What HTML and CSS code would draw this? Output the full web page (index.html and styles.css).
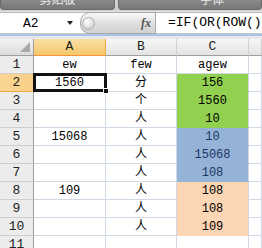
FILE: index.html
```html
<!DOCTYPE html>
<html>
<head>
<meta charset="utf-8">
<link rel="stylesheet" href="styles.css">
</head>
<body>
<div class="app">
  <div class="ribbon">
    <div class="group g1"><span class="glabel">剪贴板</span></div>
    <div class="group g2"><span class="glabel">字体</span></div>
  </div>
  <div class="fbar">
    <div class="namebox"><span class="nb-text">A2</span><span class="nb-arrow"></span></div>
    <div class="capsule"><span class="knob"></span><span class="fx">fx</span></div>
    <div class="formula">=IF(OR(ROW()</div>
  </div>
  <div class="sep"></div>
  <div class="sheet">
    <div class="corner"><span class="tri"></span></div>
    <div class="ch sel-h">A</div>
    <div class="ch">B</div>
    <div class="ch">C</div>
    <div class="ch last"></div>

    <div class="rh">1</div>
    <div class="c">ew</div><div class="c">few</div><div class="c">agew</div><div class="c last"></div>

    <div class="rh sel-r">2</div>
    <div class="c active">1560<span class="selbox"><span class="handle"></span></span></div><div class="c">分</div><div class="c green">156</div><div class="c last"></div>

    <div class="rh">3</div>
    <div class="c"></div><div class="c">个</div><div class="c green">1560</div><div class="c last"></div>

    <div class="rh">4</div>
    <div class="c"></div><div class="c">人</div><div class="c green">10</div><div class="c last"></div>

    <div class="rh">5</div>
    <div class="c">15068</div><div class="c">人</div><div class="c blue">10</div><div class="c last"></div>

    <div class="rh">6</div>
    <div class="c"></div><div class="c">人</div><div class="c blue">15068</div><div class="c last"></div>

    <div class="rh">7</div>
    <div class="c"></div><div class="c">人</div><div class="c blue">108</div><div class="c last"></div>

    <div class="rh">8</div>
    <div class="c">109</div><div class="c">人</div><div class="c peach">108</div><div class="c last"></div>

    <div class="rh">9</div>
    <div class="c"></div><div class="c">人</div><div class="c peach">108</div><div class="c last"></div>

    <div class="rh">10</div>
    <div class="c"></div><div class="c">人</div><div class="c peach">109</div><div class="c last"></div>

    <div class="rh">11</div>
    <div class="c"></div><div class="c"></div><div class="c"></div><div class="c last"></div>
  </div>
</div>
</body>
</html>
```

FILE: styles.css
```css
* { box-sizing: border-box; }
html, body { margin: 0; padding: 0; }
body {
  width: 262px;
  height: 248px;
  overflow: hidden;
  background: #e3e3e3;
  font-family: "Liberation Mono", "Noto Sans CJK SC", monospace;
}
.app { width: 262px; }

.ribbon {
  display: flex;
  gap: 3px;
  height: 11px;
  background: #cfcfcf;
}
.group {
  height: 10px;
  overflow: hidden;
  background: linear-gradient(#8a8a8a, #767676);
  border-radius: 0 0 4px 4px;
  border: 1px solid #6a6a6a;
  border-top: none;
  display: flex;
  justify-content: center;
}
.g1 { width: 115px; }
.g2 { flex: 1; padding-left: 44px; }
.glabel {
  display: block;
  margin-top: -8px;
  font-family: "Noto Sans CJK SC", sans-serif;
  font-size: 12px;
  line-height: 14px;
  color: #eaeaea;
}

.fbar {
  display: flex;
  height: 22px;
  margin-top: 1px;
  background: #fff;
  border-top: 1px solid #b9b9b9;
  border-bottom: 1px solid #c8c8c8;
}
.namebox {
  width: 80px;
  display: flex;
  align-items: center;
  padding-left: 23px;
  background: #fff;
}
.nb-text {
  font-size: 13px;
  color: #000;
  width: 44px;
}
.nb-arrow {
  width: 0;
  height: 0;
  border-left: 3px solid transparent;
  border-right: 3px solid transparent;
  border-top: 4px solid #222;
}
.capsule {
  width: 76px;
  display: flex;
  align-items: center;
  justify-content: space-between;
  padding: 0 4px 0 1px;
  background: linear-gradient(#f8f8f8, #dedede 55%, #d2d2d2);
  border: 1px solid #a9a9a9;
  border-radius: 10px 0 0 10px;
  margin: -1px 0;
}
.knob {
  width: 13px;
  height: 13px;
  border-radius: 50%;
  background: radial-gradient(circle at 40% 35%, #ffffff 0, #e6e6e6 45%, #b8b8b8 100%);
  border: 1px solid #b0b0b0;
}
.fx {
  font-family: "Liberation Serif", serif;
  font-style: italic;
  font-weight: bold;
  font-size: 12px;
  color: #555;
}
.formula {
  flex: 1;
  padding-left: 12px;
  font-size: 13px;
  line-height: 20px;
  color: #000;
  white-space: nowrap;
  overflow: hidden;
}

.sep {
  background: #e8e8e8;
  border-top: 2px solid #a9c3e6;
  height: 5px;
}

.sheet {
  display: grid;
  grid-template-columns: 34px 72px 71px 72px 13px;
  grid-template-rows: 17px repeat(11, 18px);
  background: #fff;
}
.corner {
  background: linear-gradient(#f2f2f2, #dcdcdc);
  border-right: 1px solid #9e9e9e;
  border-bottom: 1px solid #9e9e9e;
  display: flex;
  justify-content: flex-end;
  align-items: flex-end;
  padding: 0 3px 3px 0;
}
.tri {
  width: 0;
  height: 0;
  border-left: 10px solid transparent;
  border-bottom: 10px solid #a8a8a8;
}
.ch {
  background: linear-gradient(#f7f7f7, #e3e3e3);
  border-right: 1px solid #cfcfcf;
  border-bottom: 1px solid #9e9e9e;
  font-size: 13px;
  line-height: 16px;
  text-align: center;
  color: #222;
}
.ch.sel-h {
  background: linear-gradient(#fbdfa6, #f5c869);
  border-right: 1px solid #f0a849;
  border-bottom: 1px solid #f29436;
}
.rh {
  background: #ececec;
  border-right: 1px solid #9e9e9e;
  border-bottom: 1px solid #cfcfcf;
  font-size: 13px;
  line-height: 17px;
  text-align: center;
  color: #222;
}
.rh.sel-r {
  background: linear-gradient(90deg, #fbd694, #f9cf86);
  border-right: 1px solid #f29436;
  border-bottom: 1px solid #f0a849;
}
.c {
  border-right: 1px solid #d0d7e5;
  border-bottom: 1px solid #d0d7e5;
  font-size: 12px;
  line-height: 18px;
  text-align: center;
  color: #000;
  white-space: nowrap;
}
.c.green { background: #92d050; border-color: #92d050; border-right-color: #d0d7e5; }
.c.blue { background: #95b3d7; border-color: #95b3d7; border-right-color: #d0d7e5; color: #1c3566; }
.c.peach { background: #fcd5b4; border-color: #fcd5b4; border-right-color: #d0d7e5; }
.c.active { position: relative; }
.selbox {
  position: absolute;
  left: -1px;
  top: -1px;
  right: -2px;
  bottom: -1px;
  border: 3px solid #111;
}
.handle {
  position: absolute;
  right: -5px;
  bottom: -5px;
  width: 6px;
  height: 6px;
  background: #111;
  border: 1px solid #fff;
}
```
